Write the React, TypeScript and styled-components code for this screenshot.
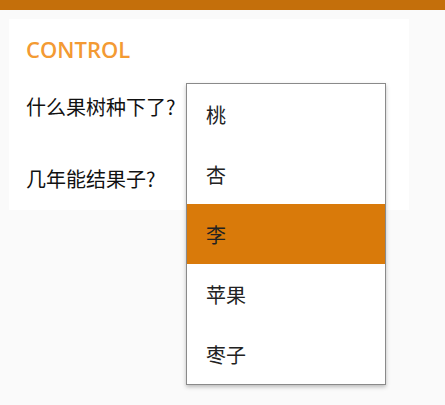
import React, { useState } from "react";
import styled, { createGlobalStyle } from "styled-components";

const GlobalStyle = createGlobalStyle`
  html, body {
    margin: 0;
    padding: 0;
    background: #fafafa;
  }
  body {
    font-family: "Open Sans", "Noto Sans CJK SC", sans-serif;
    color: #1a1a1a;
  }
`;

const Shell = styled.div`
  min-height: 405px;
  background: #fafafa;
`;

const TopBar = styled.div`
  height: 10px;
  background: #c46f0b;
`;

const Page = styled.div`
  padding: 9px;
  position: relative;
`;

const Card = styled.div`
  width: 400px;
  height: 191px;
  background: #ffffff;
  box-sizing: border-box;
  padding: 14px 17px;
  position: relative;
`;

const Title = styled.h2`
  margin: 0 0 24px;
  font-family: "Open Sans", sans-serif;
  font-weight: 600;
  font-size: 22px;
  line-height: 32px;
  color: #f39a33;
`;

const Field = styled.div`
  display: flex;
  align-items: center;
  height: 36px;
  margin-bottom: 36px;
  position: relative;
`;

const Label = styled.label`
  font-family: "Noto Sans CJK SC", sans-serif;
  font-size: 20px;
  line-height: 36px;
  color: #111;
`;

const Menu = styled.ul`
  position: absolute;
  left: 177px;
  top: 64px;
  width: 198px;
  margin: 0;
  padding: 0;
  list-style: none;
  background: #ffffff;
  border: 1px solid #8a8a8a;
  box-shadow: 0 2px 4px rgba(0, 0, 0, 0.25);
  z-index: 10;
`;

const Option = styled.li<{ $active: boolean }>`
  height: 60px;
  display: flex;
  align-items: center;
  padding-left: 19px;
  font-family: "Noto Sans CJK SC", sans-serif;
  font-size: 20px;
  color: #222;
  background: ${(p) => (p.$active ? "#d97a0a" : "transparent")};
  cursor: pointer;
`;

const fruits = ["桃", "杏", "李", "苹果", "枣子"];

export default function App() {
  const [selected, setSelected] = useState(2);

  return (
    <Shell>
      <GlobalStyle />
      <TopBar />
      <Page>
        <Card>
          <Title>CONTROL</Title>
          <Field>
            <Label>什么果树种下了?</Label>
          </Field>
          <Field>
            <Label>几年能结果子?</Label>
          </Field>
          <Menu>
            {fruits.map((f, i) => (
              <Option key={f} $active={i === selected} onClick={() => setSelected(i)}>
                {f}
              </Option>
            ))}
          </Menu>
        </Card>
      </Page>
    </Shell>
  );
}
